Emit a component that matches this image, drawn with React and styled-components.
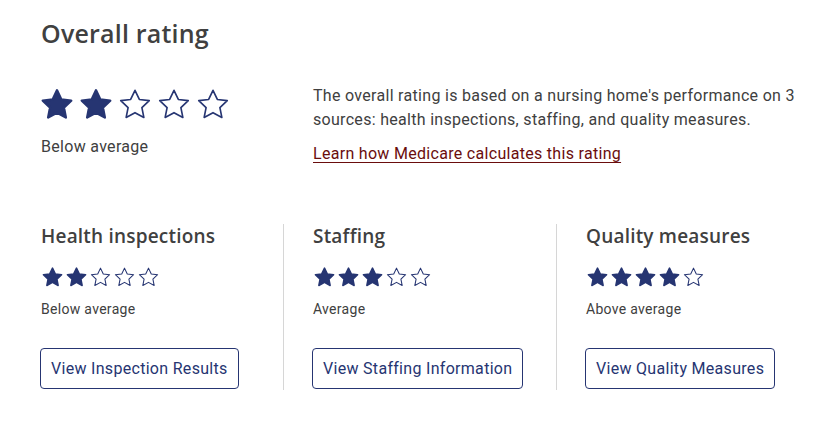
import React from 'react';
import styled, {createGlobalStyle} from 'styled-components';

const NAVY = '#263572';

const GlobalStyle = createGlobalStyle`
    body {
        margin: 0;
        background: #ffffff;
        font-family: Roboto, "Liberation Sans", sans-serif;
        color: #404040;
    }
`;

const STAR = 'M12 2.2l2.9 6.1 6.6.8-4.9 4.6 1.3 6.6L12 17.1l-5.9 3.2 1.3-6.6-4.9-4.6 6.6-.8z';

const Star = ({filled, size}) => (
    <StarSvg viewBox="0 0 24 24" $size={size}>
        <path d={STAR} fill={filled ? NAVY : '#fff'} stroke={NAVY}
              strokeWidth={filled ? 1.6 : 1.1} strokeLinejoin="round"/>
    </StarSvg>
);

const Stars = ({count, size, gap}) => (
    <StarRow $gap={gap}>
        {[0, 1, 2, 3, 4].map(i => <Star key={i} filled={i < count} size={size}/>)}
    </StarRow>
);

const SECTIONS = [
    {title: 'Health inspections', stars: 2, label: 'Below average', button: 'View Inspection Results'},
    {title: 'Staffing', stars: 3, label: 'Average', button: 'View Staffing Information'},
    {title: 'Quality measures', stars: 4, label: 'Above average', button: 'View Quality Measures'},
];

const App = () => {
    return (
        <Page>
            <GlobalStyle/>
            <Title>Overall rating</Title>
            <Overview>
                <Overall>
                    <Stars count={2} size={36} gap={3}/>
                    <OverallLabel>Below average</OverallLabel>
                </Overall>
                <Description>
                    <p>The overall rating is based on a nursing home's performance on 3 sources: health inspections, staffing, and quality measures.</p>
                    <LearnLink href="#">Learn how Medicare calculates this rating</LearnLink>
                </Description>
            </Overview>
            <Sections>
                {SECTIONS.map(s => (
                    <Section key={s.title}>
                        <SectionTitle>{s.title}</SectionTitle>
                        <Stars count={s.stars} size={23} gap={1}/>
                        <SmallLabel>{s.label}</SmallLabel>
                        <OutlineButton>{s.button}</OutlineButton>
                    </Section>
                ))}
            </Sections>
        </Page>
    );
};

export default App;

const Page = styled.div`
    padding: 17px 8px 0 41px;
`;

const Title = styled.h2`
    margin: 0;
    font-family: "Open Sans", sans-serif;
    font-weight: 600;
    font-size: 25px;
    line-height: 32px;
    color: #404040;
    letter-spacing: 0.2px;
`;

const Overview = styled.div`
    display: grid;
    grid-template-columns: 272px 1fr;
    margin-top: 38px;
`;

const Overall = styled.div`
    display: flex;
    flex-direction: column;
    margin-left: -2px;
`;

const StarRow = styled.div`
    display: flex;
    gap: ${p => p.$gap}px;
`;

const StarSvg = styled.svg`
    width: ${p => p.$size}px;
    height: ${p => p.$size}px;
    display: block;
`;

const OverallLabel = styled.span`
    margin-top: 14px;
    margin-left: 2px;
    font-size: 16px;
    letter-spacing: 0.3px;
    color: #404040;
`;

const Description = styled.div`
    font-size: 16px;
    line-height: 24px;
    letter-spacing: 0.3px;
    color: #404040;
    p {
        margin: -3px 0 0 0;
        max-width: 495px;
    }
`;

const LearnLink = styled.a`
    display: inline-block;
    margin-top: 10px;
    color: #6a0d0d;
    text-decoration: underline;
    text-underline-offset: 3px;
`;

const Sections = styled.div`
    display: grid;
    grid-template-columns: 242px 273px 1fr;
    margin-top: 58px;
`;

const Section = styled.div`
    display: flex;
    flex-direction: column;
    align-items: flex-start;
    padding-bottom: 1px;
    & + & {
        border-left: 1px solid #d6d6d6;
        padding-left: 29px;
    }
`;

const SectionTitle = styled.h3`
    margin: 0 0 18px 0;
    font-family: "Open Sans", sans-serif;
    font-weight: 600;
    font-size: 19px;
    line-height: 24px;
    letter-spacing: 0.2px;
    color: #404040;
`;

const SmallLabel = styled.span`
    margin-top: 11px;
    font-size: 14px;
    line-height: 18px;
    letter-spacing: 0.3px;
    color: #404040;
`;

const OutlineButton = styled.button`
    margin-top: 30px;
    margin-left: -1px;
    height: 41px;
    padding: 0 10px;
    border: 1px solid ${NAVY};
    border-radius: 4px;
    background: #fff;
    color: ${NAVY};
    font-family: Roboto, "Liberation Sans", sans-serif;
    font-size: 16px;
    letter-spacing: 0.3px;
    cursor: pointer;
`;
